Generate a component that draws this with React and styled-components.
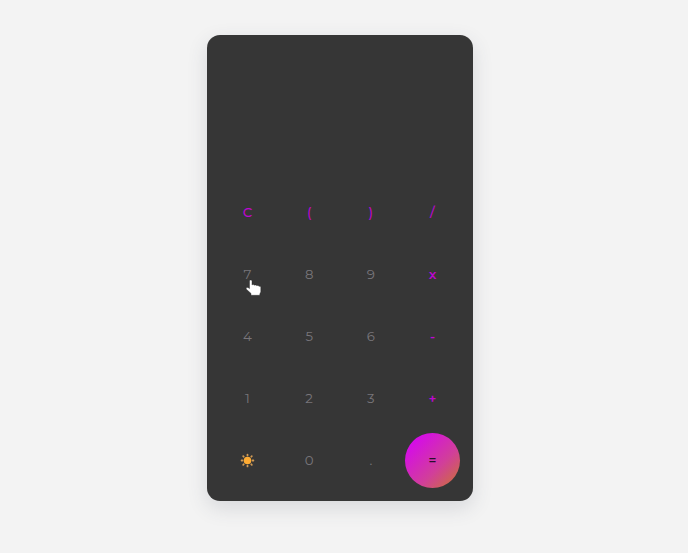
import React from "react";
import styled, { createGlobalStyle, css } from "styled-components";

const GlobalStyle = createGlobalStyle`
  * { box-sizing: border-box; }
  body { margin: 0; background: #f3f3f3; }
`;

const Page = styled.main`
  height: 553px;
  padding: 35px 215px 0 207px;
  background: #f3f3f3;
  font-family: Montserrat, Inter, sans-serif;
`;

const Calculator = styled.section`
  width: 266px;
  height: 466px;
  padding: 13px;
  display: flex;
  flex-direction: column;
  border-radius: 13px;
  background: #363636;
  box-shadow: 0 7px 20px rgba(60, 70, 85, 0.15);
`;

const Display = styled.div`
  flex: 1;
`;

const Keypad = styled.div`
  display: grid;
  grid-template-columns: repeat(4, 55px);
  grid-auto-rows: 55px;
  justify-content: space-between;
  row-gap: 7px;
`;

const variants = {
  digit: css`
    color: #78757a;
    font-weight: 400;
  `,
  operator: css`
    color: #bd08d0;
    font-weight: 500;
  `,
  sign: css`
    color: #bd08d0;
    font-weight: 600;
  `,
  equals: css`
    color: #26102b;
    font-weight: 600;
    background: linear-gradient(135deg, #d50ce8 15%, #d13f99 62%, #cd7038 96%);
  `,
  theme: css`
    color: #ffac33;
  `,
};

const Key = styled.button`
  position: relative;
  display: flex;
  align-items: center;
  justify-content: center;
  padding: 0 0 1px;
  border: 0;
  border-radius: 50%;
  background: transparent;
  font-family: inherit;
  font-size: 13.333px;
  line-height: 16px;
  ${({ $variant }) => variants[$variant]}
`;

const SunIcon = styled.svg`
  display: block;
  width: 15px;
  height: 15px;
`;

const Pointer = styled.svg`
  position: absolute;
  left: 25px;
  top: 31px;
  width: 18px;
  height: 19px;
  pointer-events: none;
`;

const Sun = () => (
  <SunIcon viewBox="0 0 15 15" fill="none" stroke="#d09a55" strokeWidth="1.8" strokeLinecap="round">
    <circle cx="7.5" cy="7.5" r="3.8" fill="#ffac33" stroke="none" />
    <path d="M7.5 1.6v.8M7.5 12.6v.8M1.6 7.5h.8M12.6 7.5h.8M3.2 3.2l.5.5M11.3 11.3l.5.5M11.8 3.2l-.5.5M3.7 11.3l-.5.5" />
  </SunIcon>
);

const Hand = () => (
  <Pointer viewBox="0 0 18 19">
    <path
      d="M4.5 3c0-1.5 2.5-1.5 2.5 0v4c.4-.6 2.2-.6 2.4.3.5-.5 2.2-.4 2.4.4.5-.4 2-.2 2.2.6.9-.3 1.8.2 1.8 1.1v4c0 1.2-1 1.8-1 2.8v1.1H6v-1.9L1.4 11.3c-.9-1.3.8-2.3 1.9-1.5l1.2.8z"
      fill="#fff"
      stroke="#202020"
      strokeWidth=".4"
      strokeLinejoin="round"
    />
  </Pointer>
);

const keys = [
  { label: "C", variant: "operator" },
  { label: "(", variant: "operator" },
  { label: ")", variant: "operator" },
  { label: "/", variant: "operator" },
  { label: "7", variant: "digit", pointer: true },
  { label: "8", variant: "digit" },
  { label: "9", variant: "digit" },
  { label: "x", variant: "sign" },
  { label: "4", variant: "digit" },
  { label: "5", variant: "digit" },
  { label: "6", variant: "digit" },
  { label: "-", variant: "sign" },
  { label: "1", variant: "digit" },
  { label: "2", variant: "digit" },
  { label: "3", variant: "digit" },
  { label: "+", variant: "sign" },
  { label: "theme", variant: "theme" },
  { label: "0", variant: "digit" },
  { label: ".", variant: "digit" },
  { label: "=", variant: "equals" },
];

export default function App() {
  return (
    <>
      <GlobalStyle />
      <Page>
        <Calculator>
          <Display />
          <Keypad>
            {keys.map(({ label, variant, pointer }) => (
              <Key key={label} $variant={variant}>
                {variant === "theme" ? <Sun /> : <span>{label}</span>}
                {pointer && <Hand />}
              </Key>
            ))}
          </Keypad>
        </Calculator>
      </Page>
    </>
  );
}
